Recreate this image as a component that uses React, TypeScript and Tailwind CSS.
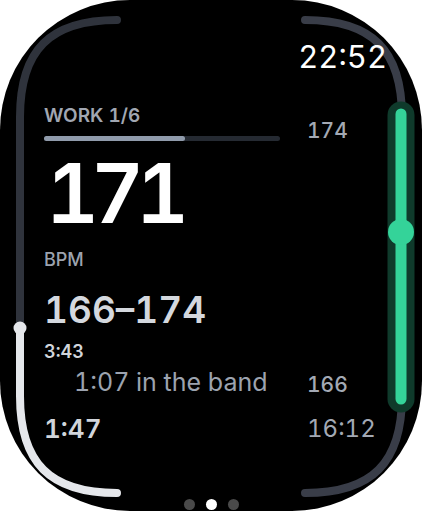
import React from "react";

function Arcs() {
  return (
    <svg
      className="pointer-events-none absolute inset-0"
      width="422"
      height="511"
      viewBox="0 0 422 511"
      fill="none"
    >
      {/* left track */}
      <path
        d="M117 20 C50 20 20 50 20 117 V328"
        stroke="#2f333c"
        strokeWidth="8"
        strokeLinecap="round"
      />
      <path
        d="M20 328 V396 C20 463 50 493 117 493"
        stroke="#e5e7eb"
        strokeWidth="8"
        strokeLinecap="round"
      />
      <circle cx="20" cy="328" r="6.5" fill="#e5e7eb" />

      {/* right track */}
      <path
        d="M305 20 C372 20 402 50 402 117 V396 C402 463 372 493 305 493"
        stroke="#393d48"
        strokeWidth="8"
        strokeLinecap="round"
      />
      <line x1="401" y1="115" x2="401" y2="399" stroke="#0f3a2b" strokeWidth="27" strokeLinecap="round" />
      <line x1="401" y1="114" x2="401" y2="399" stroke="#34d399" strokeWidth="11" strokeLinecap="round" />
      <circle cx="401" cy="232" r="13" fill="#34d399" />
    </svg>
  );
}

export default function App() {
  return (
    <div
      className="h-[514px] w-[422px] bg-white tabular-nums"
      style={{ fontFamily: "Inter, 'Noto Sans', sans-serif" }}
    >
      <div className="relative h-[511px] w-[422px] overflow-hidden rounded-[130px] bg-black">
        <Arcs />
        <div className="relative flex h-full flex-col">
          <div className="flex justify-end pr-[35px] pt-[41px]">
            <span className="text-[31px] leading-none font-normal text-white">22:52</span>
          </div>

          <div className="flex">
            <div className="ml-[44px] mt-[34px] flex w-[236px] flex-col">
              <span className="text-[19px] leading-none font-semibold text-[#a1a7b2]">WORK 1/6</span>
              <div className="mt-[11px] h-[5px] w-[236px] rounded-full bg-[#252a32]">
                <div className="h-full w-[141px] rounded-full bg-[#909bab]" />
              </div>
              <span className="ml-[2px] mt-[12px] text-[82px] leading-none font-semibold tracking-[-8px] text-white">171</span>
              <span className="mt-[16px] text-[18px] leading-none font-medium text-[#9ca3af]">BPM</span>
              <span className="mt-[22px] text-[37px] leading-none font-semibold text-[#d4d8de]">166–174</span>
              <span className="mt-[15px] text-[18px] leading-none font-semibold text-[#d1d5db]">3:43</span>
              <span className="ml-[30px] mt-[9px] whitespace-nowrap text-[25px] leading-none font-normal text-[#9ca3af]">
                1:07 in the band
              </span>
              <span className="mt-[21px] text-[26px] leading-none font-semibold text-[#d1d5db]">1:47</span>
            </div>

            <div className="ml-[27px] mt-[48px] flex flex-col">
              <span className="text-[21px] leading-none font-medium text-[#a3a9b4]">174</span>
              <span className="mt-[233px] text-[21px] leading-none font-medium text-[#a3a9b4]">166</span>
              <span className="mt-[22px] text-[24px] leading-none font-normal text-[#a3a9b4]">16:12</span>
            </div>
          </div>

          <div className="mt-auto flex justify-center gap-[11px] pb-[1px]">
            <span className="h-[11px] w-[11px] rounded-full bg-[#4a4a4a]" />
            <span className="h-[11px] w-[11px] rounded-full bg-white" />
            <span className="h-[11px] w-[11px] rounded-full bg-[#4a4a4a]" />
          </div>
        </div>
      </div>
    </div>
  );
}
